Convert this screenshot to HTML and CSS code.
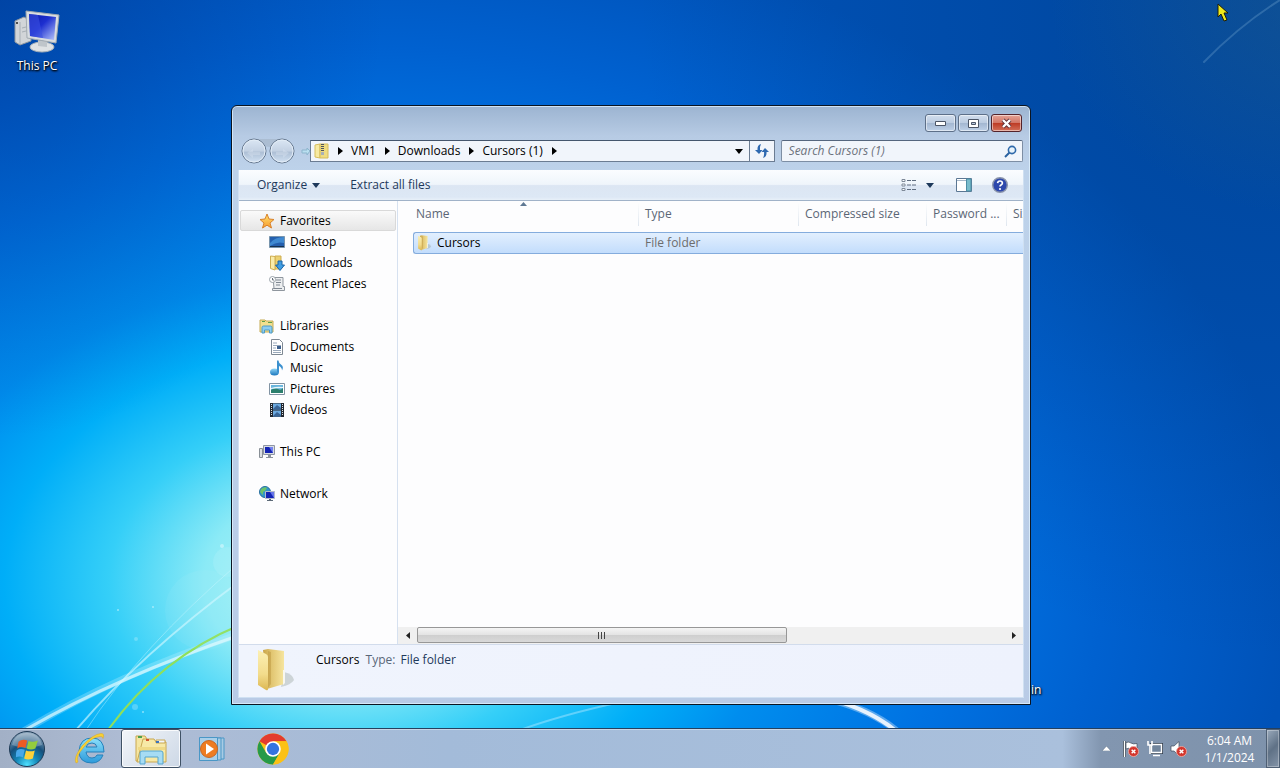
FILE: index.html
```html
<!DOCTYPE html>
<html lang="en">
<head>
  <meta charset="UTF-8">
  <title>Cursors (1)</title>
  <link rel="stylesheet" href="styles.css">
</head>
<body>

<!-- shared gradients and symbols -->
<svg class="defs" aria-hidden="true">
  <defs>
    <linearGradient id="gFolder" x1="0" y1="0" x2="0" y2="1">
      <stop offset="0" stop-color="#fcf0b4"/><stop offset=".6" stop-color="#f3dc8c"/><stop offset="1" stop-color="#dcb752"/>
    </linearGradient>
    <linearGradient id="gFolderBack" x1="0" y1="0" x2="1" y2="0">
      <stop offset="0" stop-color="#c9a448"/><stop offset=".35" stop-color="#dfc26c"/><stop offset="1" stop-color="#f6e59f"/>
    </linearGradient>
    <linearGradient id="gScreen" x1="0" y1="0" x2="1" y2="1">
      <stop offset="0" stop-color="#0a18a8"/><stop offset=".45" stop-color="#1d2fd0"/><stop offset="1" stop-color="#b9c8fb"/>
    </linearGradient>
    <linearGradient id="gBlue" x1="0" y1="0" x2="0" y2="1">
      <stop offset="0" stop-color="#8fd4f6"/><stop offset="1" stop-color="#1a76bd"/>
    </linearGradient>
    <linearGradient id="gStar" x1="0" y1="0" x2="0" y2="1">
      <stop offset="0" stop-color="#ffe36e"/><stop offset="1" stop-color="#f79a2e"/>
    </linearGradient>
    <radialGradient id="gOrb" cx=".5" cy=".95" r=".9">
      <stop offset="0" stop-color="#4fe0ff"/><stop offset=".35" stop-color="#1487b8"/><stop offset=".65" stop-color="#16507c"/><stop offset="1" stop-color="#8aa4bb"/>
    </radialGradient>
    <linearGradient id="gRound" x1="0" y1="0" x2="0" y2="1">
      <stop offset="0" stop-color="#dbe7f4"/><stop offset=".5" stop-color="#c3d1e3"/><stop offset=".55" stop-color="#adbfd5"/><stop offset="1" stop-color="#d3e3f4"/>
    </linearGradient>
    <linearGradient id="gIe" x1="0" y1="0" x2="0" y2="1">
      <stop offset="0" stop-color="#8be0fb"/><stop offset="1" stop-color="#2c9adb"/>
    </linearGradient>
  </defs>
  <symbol id="folder" viewBox="0 0 40 44">
    <path d="M27 24q9 2 10 8-3 5-13 7z" fill="#7f8a80" opacity=".3"/>
    <path d="M6 2l5-1 16 2v33l-17 5z" fill="url(#gFolderBack)"/>
    <path d="M11 3l3 1v32l-4 5z" fill="#b8923c" opacity=".45"/>
    <path d="M26 22h2v13l-2 2z" fill="#f8f7ef"/>
    <path d="M1 2l8 4q2 1 2 3v32q0 2-2 1l-8-5z" fill="url(#gFolder)"/>
  </symbol>
  <symbol id="library" viewBox="0 0 16 16">
    <path d="M1 2h5l1 1h7v11H1z" fill="#f2e08f" stroke="#c5ab55"/>
    <path d="M3 3.500h3M9 4.500h4" stroke="#5d9e4d"/>
    <path d="M3 15V9.500Q3 8 4.500 8h7Q13 8 13 9.500V15h-2.500v-3h-5v3z" fill="#8ccdf0" stroke="#4d9ac6"/>
  </symbol>
  <symbol id="right" viewBox="0 0 5 8"><path d="M0 0l5 4-5 4z" fill="#000"/></symbol>
  <symbol id="down" viewBox="0 0 8 5"><path d="M0 0h8L4 5z" fill="currentColor"/></symbol>
  <symbol id="cross" viewBox="0 0 12 12">
    <circle cx="6" cy="6" r="5.500" fill="#d3352c" stroke="#eaa39d"/>
    <path d="M4 4l4 4M8 4l-4 4" stroke="#fff" stroke-width="1.600"/>
  </symbol>
  <symbol id="flag" viewBox="0 0 40 40">
    <path d="M4 9q6-5 14-2l-3 12q-7-3-13 1z" fill="#ee5a24"/>
    <path d="M20 8q7 3 15-1l-4 13q-7 3-14 0z" fill="#93cc3d"/>
    <path d="M1 23q6-4 13-1l-3 12q-6-3-13 1z" fill="#47a8ea"/>
    <path d="M16 23q7 3 14 0l-3 13q-8 3-14 0z" fill="#fdd13a"/>
  </symbol>
</svg>

<main class="desktop">
  <svg class="beams" viewBox="0 0 1280 728" preserveAspectRatio="none" aria-hidden="true">
    <g fill="none" stroke-linecap="round">
      <path d="M22 732Q115 675 240 634" stroke="#bff3ff" stroke-width="7" opacity=".3"/>
      <path d="M25 730Q115 678 240 635" stroke="#e4fbff" stroke-width="3" opacity=".7"/>
      <path d="M76 730Q140 655 240 581" stroke="#cff7ff" stroke-width="2" opacity=".65"/>
      <path d="M86 730Q140 648 240 562" stroke="#cff7ff" opacity=".4"/>
      <path d="M108 730Q160 658 240 625" stroke="#8fe05a" stroke-width="2"/>
      <path d="M520 730Q570 712 640 698" stroke="#a8e6ff" stroke-width="2" opacity=".5"/>
      <path d="M820 697Q870 708 898 732" stroke="#fff" stroke-width="7" opacity=".35"/>
      <path d="M820 696Q868 708 896 731" stroke="#fff" stroke-width="4" opacity=".85"/>
      <path d="M1204 62Q1240 25 1280 0" stroke="#7fb0d8" stroke-width="2" opacity=".3"/>
    </g>
    <g fill="#dffaff" opacity=".55">
      <circle cx="222" cy="546" r="2"/><circle cx="118" cy="610" r="1"/><circle cx="153" cy="607" r="1"/>
      <circle cx="136" cy="639" r="2" opacity=".5"/><circle cx="135" cy="707" r="3" opacity=".5"/><circle cx="143" cy="712" r="1"/>
      <circle cx="228" cy="562" r="15" opacity=".25"/><circle cx="205" cy="610" r="40" opacity=".12"/>
    </g>
  </svg>

  <a class="shortcut this-pc" href="#">
    <svg width="48" height="48" viewBox="0 0 48 48" aria-hidden="true">
      <path d="M2 13l9-4 7 4v20l-11 4-5-3z" fill="#d2d5d8" stroke="#8f979e"/>
      <path d="M7 14v22M9 20l8-2M9 24l8-2" stroke="#a8afb5"/>
      <circle cx="4" cy="15" r="1" fill="#222"/>
      <ellipse cx="29" cy="39" rx="12" ry="5" fill="#dfe2e4" stroke="#aab2b8"/>
      <path d="M25 32l9 1v6l-9-1z" fill="#bfc5ca"/>
      <path d="M13 3l33 4-3 28-29-5z" fill="#d9dde0" stroke="#a2aab0"/>
      <path d="M16 6l27 3-2 23-24-4z" fill="url(#gScreen)"/>
      <path d="M16 6l9 1 5 23-13-2z" fill="#3b50e0" opacity=".6"/>
    </svg>
    <span>This PC</span>
  </a>
  <a class="shortcut recycle" href="#"><span>Recycle Bin</span></a>

  <section class="window" aria-label="Cursors (1)">
    <header class="titlebar">
      <button class="caption" aria-label="Minimize">
        <svg width="13" height="7" viewBox="0 0 13 7"><path d="M1.500 1.500h10v4h-10z" fill="#fff" stroke="#4b5566"/></svg>
      </button>
      <button class="caption" aria-label="Maximize">
        <svg width="11" height="9" viewBox="0 0 11 9"><path d="M.5.5h10v8H.5z" fill="#fff" stroke="#4b5566"/><path d="M3.500 3.500h4v2h-4z" fill="#b7c7dd" stroke="#4b5566"/></svg>
      </button>
      <button class="caption close" aria-label="Close">
        <svg width="13" height="11" viewBox="0 0 13 11"><path d="M3 2l7 7M10 2L3 9" stroke="#5e3037" stroke-width="4"/><path d="M3 2l7 7M10 2L3 9" stroke="#fff" stroke-width="2.400"/></svg>
      </button>
    </header>

    <div class="navbar">
      <div class="travel">
        <svg width="70" height="28" viewBox="0 0 70 28" aria-hidden="true">
          <path d="M15 2h28v5q-7 3-14 3t-14-3z" fill="#a5b6cb" opacity=".7"/>
          <path d="M61 13h5v-2l3 3-3 4v-2h-5z" fill="#b9dff0" stroke="#8db5cd"/>
        </svg>
        <button class="round back" aria-label="Back">
          <svg width="26" height="26" viewBox="0 0 26 26"><circle cx="13" cy="13" r="12" fill="url(#gRound)" stroke="#66788f"/><circle cx="13" cy="13" r="11" fill="none" stroke="#e3edf7"/><path d="M6 15l6-4v3h7v3h-7v3z" fill="#e0e9f3" opacity=".35"/></svg>
        </button>
        <button class="round forward" aria-label="Forward">
          <svg width="26" height="26" viewBox="0 0 26 26"><circle cx="13" cy="13" r="12" fill="url(#gRound)" stroke="#66788f"/><circle cx="13" cy="13" r="11" fill="none" stroke="#e3edf7"/><path d="M20 15l-6-4v3H7v3h7v3z" fill="#e0e9f3" opacity=".35"/></svg>
        </button>
      </div>
      <div class="address">
        <svg class="zip" width="16" height="16" viewBox="0 0 16 16" aria-hidden="true">
          <path d="M1 2l5-1v14l-5-1z" fill="#f7eaa2" stroke="#d6bd5c"/><path d="M6 1h8v14H6z" fill="#efdc80" stroke="#d6bd5c"/>
          <path d="M8.500 1v9" stroke="#4e5560" stroke-width="3" stroke-dasharray="1 1"/><path d="M7 9h3v3H7z" fill="#a8b0b8"/>
        </svg>
        <svg class="sep" width="5" height="8"><use href="#right"/></svg>
        <a href="#">VM1</a>
        <svg class="sep" width="5" height="8"><use href="#right"/></svg>
        <a href="#">Downloads</a>
        <svg class="sep" width="5" height="8"><use href="#right"/></svg>
        <a href="#">Cursors (1)</a>
        <svg class="sep" width="5" height="8"><use href="#right"/></svg>
        <button class="history" aria-label="Previous locations"><svg width="8" height="5"><use href="#down"/></svg></button>
        <button class="refresh" aria-label="Refresh">
          <svg width="16" height="16" viewBox="0 0 16 16"><path d="M7 1Q3 2 3.500 7H1l4 4 3.500-4H6Q5.500 4 7 1z" fill="#2e69b0"/><path d="M9 15q4-1 3.500-6H15l-4-4-3.500 4H10q.5 3-1 6z" fill="#2e69b0"/></svg>
        </button>
      </div>
      <div class="search">
        <input type="search" placeholder="Search Cursors (1)" aria-label="Search Cursors (1)">
        <svg width="13" height="13" viewBox="0 0 13 13" aria-hidden="true"><path d="M1 12l5-5" stroke="#2b62a0" stroke-width="2"/><circle cx="8" cy="5" r="3.600" fill="#e8f3fb" stroke="#2f69aa" stroke-width="1.600"/></svg>
      </div>
    </div>

    <div class="client">
      <div class="toolbar">
        <button>Organize <svg width="8" height="5"><use href="#down"/></svg></button>
        <button>Extract all files</button>
        <button class="views" aria-label="Change your view">
          <svg width="16" height="14" viewBox="0 0 16 14"><path d="M1 1.500h3v2H1zM1 6h3v2H1zM1 10.500h3v2H1z" fill="#fff" stroke="#7f8a99"/><path d="M6 2.500h4M11 2.500h4M6 7h4M11 7h4M6 11.500h4M11 11.500h4" stroke="#5f6d80"/></svg>
          <svg width="8" height="5"><use href="#down"/></svg>
        </button>
        <button class="preview" aria-label="Show the preview pane">
          <svg width="16" height="14" viewBox="0 0 16 14"><path d="M.5.5h15v13H.5z" fill="#fff" stroke="#5b7793"/><path d="M1 2.500h10" stroke="#a8b9ca"/><path d="M10.500 1h4.500v12h-4.500z" fill="#79bccb" stroke="#4d8ea5"/></svg>
        </button>
        <button aria-label="Get help">
          <svg width="16" height="16" viewBox="0 0 16 16"><circle cx="8" cy="8" r="7.300" fill="#2d48ac" stroke="#8a94ab" stroke-width="1.400"/><path d="M5.600 6.200Q5.800 4 8 4t2.400 2Q10.400 7.200 9 8q-1 .6-1 1.600" fill="none" stroke="#fff" stroke-width="1.700"/><circle cx="8" cy="12" r="1.100" fill="#fff"/></svg>
        </button>
      </div>

      <div class="panes">
        <nav class="sidebar">
          <ul>
            <li><a class="head selected" href="#">
              <svg width="16" height="16" viewBox="0 0 16 16"><path d="M8 1l2 5 5 .5-4 3.500 1.500 5L8 12.200 3.500 15 5 10 1 6.500 6 6z" fill="url(#gStar)" stroke="#d9822b"/></svg>
              Favorites</a></li>
            <li><a href="#">
              <svg width="16" height="16" viewBox="0 0 16 16"><path d="M.5 2.500h15v11H.5z" fill="#245fae" stroke="#7894ad"/><path d="M1 9Q6 3 15 3v6Q8 7 1 12z" fill="#4c9be0" opacity=".7"/><path d="M1 12h14v1H1z" fill="#17304e"/></svg>
              Desktop</a></li>
            <li><a href="#">
              <svg width="16" height="16" viewBox="0 0 16 16"><path d="M6 1h6v13H6z" fill="#ecd170" stroke="#cfae52"/><path d="M1.500 1l4.500.5V15l-4.500-1.500z" fill="#f9ecaa" stroke="#cfae52"/><path d="M9 6h4v4h2.500L11 15.500 6.500 10H9z" fill="#3f9de3" stroke="#1b64a6"/></svg>
              Downloads</a></li>
            <li><a href="#">
              <svg width="16" height="16" viewBox="0 0 16 16"><path d="M4 1.500h10v9h1.500v4H3.500v-2H5z" fill="#eceef0" stroke="#8f969e"/><path d="M7 4h5M7 6.500h5M7 9h4M5 12.500h8" stroke="#7e8792"/><circle cx="3.500" cy="3.500" r="3" fill="#fff" stroke="#9aa2aa"/><path d="M3.500 2v2H5" stroke="#68717c" fill="none"/></svg>
              Recent Places</a></li>
          </ul>
          <ul>
            <li><a class="head" href="#"><svg width="16" height="16"><use href="#library"/></svg> Libraries</a></li>
            <li><a href="#">
              <svg width="16" height="16" viewBox="0 0 16 16"><path d="M2.500.5h8l3 3v12h-11z" fill="#fff" stroke="#7e8893"/><path d="M4 4h4M4 6.500h8M4 9h3M4 11.500h8M4 13.500h8" stroke="#9aa9bb"/><path d="M8 7h4v3H8z" fill="#3c5f8d"/></svg>
              Documents</a></li>
            <li><a href="#">
              <svg width="16" height="16" viewBox="0 0 16 16"><ellipse cx="5.500" cy="12" rx="4.500" ry="3.500" fill="url(#gBlue)"/><path d="M8 12.500V.5h1.500q0 2.500 3 4.500 2.500 2 .5 5.500 0-3-3-4.500v6.500z" fill="#3b90cf"/></svg>
              Music</a></li>
            <li><a href="#">
              <svg width="16" height="16" viewBox="0 0 16 16"><path d="M.5 2.500h15v11H.5z" fill="#fff" stroke="#8193a3"/><path d="M2 4h12v8H2z" fill="#69b5dd"/><path d="M2 9q4-3 7-1t5-1v5H2z" fill="#2c7f6d"/><path d="M2 7q6-2 12-1v1Q8 7 2 8z" fill="#e8f6fa"/></svg>
              Pictures</a></li>
            <li><a href="#">
              <svg width="16" height="16" viewBox="0 0 16 16"><path d="M1 1h14v14H1z" fill="#23282f"/><path d="M4 1.500h8v6H4zM4 8.500h8v6H4z" fill="#6ca9df"/><path d="M4 7l4-4 4 3v1.500H4zM4 14l4-4 4 3v1.500H4z" fill="#3a6596"/><path d="M2.500 2v12M13.500 2v12" stroke="#dfe5ea" stroke-dasharray="1 1"/></svg>
              Videos</a></li>
          </ul>
          <ul>
            <li><a class="head" href="#">
              <svg width="16" height="16" viewBox="0 0 16 16"><path d="M.5 4.500h3v9h-3z" fill="#dcdfe2" stroke="#888f96"/><path d="M4.500 1.500h11v9h-11z" fill="#d9dde3" stroke="#8f96a5"/><path d="M6 3h8v6H6z" fill="#1424b4"/><path d="M10 3h4v6z" fill="#7382ef"/><path d="M9 11h3v2h2v1H7v-1h2z" fill="#8c939b"/></svg>
              This PC</a></li>
          </ul>
          <ul>
            <li><a class="head" href="#">
              <svg width="16" height="16" viewBox="0 0 16 16"><circle cx="6" cy="6" r="5.500" fill="#3196cb" stroke="#286f9e"/><path d="M2 3q4-3 6-1L6 5l-2 1v3L1 6z" fill="#6cc36a"/><path d="M6.500 5.500h9v7h-9z" fill="#1424b4" stroke="#b5bccb"/><path d="M11 6h4v6z" fill="#6675ea"/><path d="M10 13h2v1h2v1H8v-1h2z" fill="#5c6977"/></svg>
              Network</a></li>
          </ul>
        </nav>

        <div class="files">
          <div class="list">
            <table>
              <colgroup><col class="c-name"><col class="c-type"><col class="c-size"><col class="c-pass"><col></colgroup>
              <thead>
                <tr><th>Name<svg class="sort" width="7" height="4" viewBox="0 0 7 4" aria-hidden="true"><path d="M0 4l3.500-4L7 4z" fill="#5f7893"/></svg></th><th>Type</th><th>Compressed size</th><th>Password ...</th><th>Siz</th></tr>
              </thead>
              <tbody>
                <tr><td><svg width="16" height="16"><use href="#folder"/></svg>Cursors</td><td>File folder</td><td></td><td></td><td></td></tr>
              </tbody>
            </table>
          </div>
          <div class="scrollbar">
            <button aria-label="Scroll left"><svg width="4" height="7" viewBox="0 0 4 7"><path d="M4 0v7L0 3.500z" fill="#222"/></svg></button>
            <div class="track"><div class="thumb"><i></i><i></i><i></i></div></div>
            <button aria-label="Scroll right"><svg width="4" height="7" viewBox="0 0 4 7"><path d="M0 0v7l4-3.500z" fill="#222"/></svg></button>
          </div>
        </div>
      </div>

      <footer class="details">
        <svg width="40" height="44" aria-hidden="true"><use href="#folder"/></svg>
        <p><strong>Cursors</strong> <span>Type:</span> File folder</p>
      </footer>
    </div>
  </section>

  <svg class="pointer" width="12" height="20" viewBox="0 0 12 20" aria-hidden="true"><path d="M1 1v13l3-3 3 7 3-1-3-7h4z" fill="#f0ea1c" stroke="#1d1d08"/></svg>
</main>

<footer class="taskbar">
  <button class="start" aria-label="Start">
    <svg width="38" height="38" viewBox="0 0 38 38"><circle cx="19" cy="19" r="17.500" fill="url(#gOrb)" stroke="#1e3a55"/><path d="M4 15Q7 3 19 3t15 12q-15 6-30 0z" fill="#fff" opacity=".25"/><use href="#flag" x="8" y="6" width="25" height="25"/></svg>
  </button>
  <button class="task" aria-label="Internet Explorer">
    <svg width="34" height="34" viewBox="0 0 34 34"><path d="M31 20H13q1 6 6 6 4 0 5-3h6q-3 8-11 8Q6 31 6 19 7 6 19 6q12 0 12 14zM13 15h11q-1-4-5-4-5 0-6 4z" fill="url(#gIe)" stroke="#2581bb"/><path d="M3 31Q0 26 9 14 20 2 28 1.500q4 0 2 5 0-2.500-3-2Q19 5 11 15 2 25 5 30z" fill="#f9d132" stroke="#d9a521" stroke-width=".5"/></svg>
  </button>
  <button class="task active" aria-label="Windows Explorer">
    <svg width="34" height="32" viewBox="0 0 34 32"><path d="M2 3h9l2 3v22H2z" fill="#f5e6a1" stroke="#c9a750"/><path d="M9 6h11l2 3h10v20H3z" fill="#f7e9a6" stroke="#c9a750"/><path d="M4 3h4v2H4z" fill="#4fa04b"/><path d="M12 6h3v2h-3z" fill="#d3542e"/><path d="M22 7h9v3h-9z" fill="#f4f7fa" stroke="#c9a750"/><path d="M22 8h3v2h-3z" fill="#3c74bd"/><path d="M4 14h27v3H4z" fill="#efd985"/><path d="M6 31V20q0-2 2-2h19q2 0 2 2v11h-5v-7H11v7z" fill="#a6dcf4" stroke="#54a5cf"/></svg>
  </button>
  <button class="task" aria-label="Windows Media Player">
    <svg width="28" height="28" viewBox="0 0 28 28"><path d="M8 3h18v21H8z" fill="#a8cbe4" stroke="#4a97c6"/><path d="M5 3h18v22H5z" fill="#a8cbe4" stroke="#4a97c6"/><path d="M1.500 2.500h18v23h-18z" fill="#a9cfe9" stroke="#4a97c6"/><circle cx="11" cy="14" r="8.500" fill="#ee7c22" stroke="#c76826"/><path d="M8 8.500l8 5.500-8 5.500z" fill="#fff"/></svg>
  </button>
  <button class="task" aria-label="Google Chrome">
    <svg width="34" height="34" viewBox="0 0 48 48"><circle cx="24" cy="24" r="22" fill="#fbc116"/><path d="M24 24L4.950 13A22 22 0 0 1 43.050 13H24z" fill="#e33b2e"/><path d="M4.950 13L14.470 29.500 24 35 24 46A22 22 0 0 1 4.950 13z" fill="#269a49"/><path d="M24 46l9.530-16.500L24 24 14.470 29.500z" fill="#269a49"/><path d="M24 46A22 22 0 0 0 43.050 13H24l9.530 16.500z" fill="#fbc116"/><circle cx="24" cy="24" r="11" fill="#fff"/><circle cx="24" cy="24" r="8.700" fill="#3474e0"/></svg>
  </button>

  <div class="tray">
    <button aria-label="Show hidden icons"><svg width="9" height="5" viewBox="0 0 9 5"><path d="M0 5l4.500-5L9 5z" fill="#fff" stroke="#5b6c80" stroke-width=".5"/></svg></button>
    <button aria-label="Action Center">
      <svg width="18" height="18" viewBox="0 0 18 18"><path d="M2.500 1v16" stroke="#2f3b4a" stroke-width="3"/><path d="M2.500 1v16" stroke="#fff" stroke-width="1.500"/><path d="M4 2.500q3-1 5 .5t6 .5v6q-4 1-6-.5T4 9z" fill="#fff" stroke="#3f4c5c" stroke-width=".7"/><use href="#cross" x="6" y="6" width="11" height="11"/></svg>
    </button>
    <button aria-label="Network">
      <svg width="18" height="18" viewBox="0 0 18 18"><path d="M5.500 4.500h10v8h-10z" fill="#71859c" stroke="#2f3b4a" stroke-width="3"/><path d="M5.500 4.500h10v8h-10z" fill="#71859c" stroke="#fff" stroke-width="1.400"/><path d="M7 15.500h7M2 1v4h4V1M4 5v9" stroke="#fff" stroke-width="1.600" fill="none"/></svg>
    </button>
    <button aria-label="Volume">
      <svg width="18" height="18" viewBox="0 0 18 18"><path d="M1 6h3l5-4.500v14L4 11H1z" fill="#fff" stroke="#3f4c5c" stroke-width=".7"/><use href="#cross" x="6" y="6" width="11" height="11"/></svg>
    </button>
    <button class="clock"><time>6:04 AM</time><time>1/1/2024</time></button>
  </div>
  <button class="peek" aria-label="Show desktop"></button>
</footer>

</body>
</html>
```

FILE: styles.css
```css
* {
  box-sizing: border-box;
}

body {
  margin: 0;
  height: 100vh;
  display: flex;
  flex-direction: column;
  overflow: hidden;
  font: 12px/16px "Open Sans", "Noto Sans", sans-serif;
  color: #000;
}

button, input {
  font: inherit;
  color: inherit;
  margin: 0;
  padding: 0;
  border: none;
  background: none;
}

button {
  display: flex;
  align-items: center;
  justify-content: center;
}

a {
  color: inherit;
  text-decoration: none;
}

svg {
  flex: none;
  display: block;
}

.defs {
  position: absolute;
  width: 0;
  height: 0;
}

/* Desktop */
.desktop {
  flex: 1;
  position: relative;
  overflow: hidden;
  background:
    radial-gradient(ellipse 22% 30% at 104% 0%, rgba(40, 100, 140, 0.4), transparent),
    radial-gradient(ellipse 50% 90% at 100% 0%, rgba(0, 50, 110, 0.4), transparent),
    radial-gradient(ellipse 30% 60% at 0% 0%, rgba(0, 50, 140, 0.5), transparent),
    radial-gradient(ellipse 74% 92% at 27% 80%, #c4fbf5 0%, #8beaf6 15%, #35cff8 25%, #00aef8 36%, #008dee 46%, #0072e2 64%, #0061d0 80%, #0052b8 100%);
}

.beams {
  width: 100%;
  height: 100%;
}

.shortcut {
  position: absolute;
  display: flex;
  flex-direction: column;
  align-items: center;
  width: 74px;
  color: #fff;
  text-shadow: 0 1px 2px #000, 1px 1px 2px #000;
}

.this-pc {
  left: 0;
  top: 8px;
  gap: 2px;
}

.recycle {
  right: 233px;
  bottom: 30px;
  white-space: nowrap;
}

.pointer {
  position: absolute;
  right: 51px;
  top: 3px;
}

/* Explorer window */
.window {
  position: absolute;
  left: 231px;
  right: 249px;
  top: 105px;
  bottom: 23px;
  display: flex;
  flex-direction: column;
  padding: 0 6px 6px;
  border: 1px solid #0b1522;
  border-radius: 6px 6px 0 0;
  background: linear-gradient(#9cb4d1, #b7cbe4 30px, #bdd2ea 64px, #b9cbe6);
  box-shadow: inset 0 0 0 1px rgba(225, 243, 255, 0.75);
}

.titlebar {
  display: flex;
  justify-content: flex-end;
  gap: 2px;
  height: 31px;
  padding: 8px 2px 0 0;
}

.caption {
  width: 31px;
  height: 18px;
  border: 1px solid #5d6f88;
  border-radius: 3px;
  background: linear-gradient(#d2deed, #bccce1 48%, #a3b7d1 52%, #bed1e8);
  box-shadow: inset 0 0 0 1px rgba(255, 255, 255, 0.5);
}

.close {
  border-color: #53232b;
  background: linear-gradient(#e5a396, #d27666 48%, #bd3b25 52%, #d3705a);
}

.navbar {
  display: flex;
  align-items: center;
  height: 28px;
  margin-bottom: 5px;
  padding: 0 1px 0 3px;
}

.travel {
  position: relative;
  width: 69px;
}

.round {
  position: absolute;
  top: 1px;
  border-radius: 50%;
}

.back {
  left: 0;
}

.forward {
  left: 28px;
}

.address {
  flex: 1;
  display: flex;
  align-items: center;
  gap: 8px;
  height: 22px;
  padding-left: 3px;
  border: 1px solid #6b7c92;
  border-top-color: #45566d;
  background: #f1f5fb;
}

.sep {
  margin-left: 1px;
}

.zip {
  margin-right: -1px;
}

.history {
  margin-left: auto;
}

.refresh {
  width: 25px;
  height: 20px;
  margin-left: -2px;
  border-left: 1px solid #6b7c92;
}

.search {
  display: flex;
  align-items: center;
  width: 31%;
  height: 22px;
  margin-left: 6px;
  padding: 0 5px 0 7px;
  border: 1px solid #7d8ea4;
  border-top-color: #55667e;
  border-radius: 2px;
  background: #f1f5fb;
}

.search input {
  flex: 1;
  min-width: 0;
  outline: none;
  font-style: italic;
}

.search input::placeholder {
  color: #6c727b;
}

.client {
  flex: 1;
  min-height: 0;
  display: flex;
  flex-direction: column;
  border: 1px solid #cfe0f2;
  border-top: none;
  background: #fdfdfe;
}

/* Command bar */
.toolbar {
  display: flex;
  align-items: center;
  height: 31px;
  padding: 0 15px 0 18px;
  border-bottom: 1px solid #a0b2c8;
  background: linear-gradient(#fbfdff, #eff5fb 48%, #dce6f3 52%, #dde8f5 90%, #e8f0f9);
  color: #1e395b;
}

.toolbar button {
  gap: 5px;
  margin-right: 30px;
}

.toolbar .views {
  gap: 9px;
  margin-left: auto;
  margin-right: 22px;
}

.toolbar .preview {
  margin-right: 20px;
}

.toolbar button:last-child {
  margin-right: 0;
}

.panes {
  flex: 1;
  min-height: 0;
  display: flex;
}

.sidebar {
  width: 159px;
  padding: 9px 1px;
  border-right: 1px solid #d6e1f0;
}

.sidebar ul {
  list-style: none;
  margin: 0 0 21px;
  padding: 0;
}

.sidebar a {
  display: flex;
  align-items: center;
  gap: 5px;
  height: 21px;
  padding-left: 29px;
}

.sidebar .head {
  padding-left: 19px;
}

.sidebar .selected {
  padding-left: 18px;
  border: 1px solid #d9d9d9;
  border-radius: 2px;
  background: linear-gradient(#fafafa, #e6e6e6);
}

/* File list */
.files {
  flex: 1;
  min-width: 0;
  display: flex;
  flex-direction: column;
}

.list {
  flex: 1;
  min-height: 0;
  overflow: hidden;
  padding-left: 15px;
}

table {
  width: 100%;
  table-layout: fixed;
  border-spacing: 0;
}

.c-name {
  width: 226px;
}

.c-type {
  width: 160px;
}

.c-size {
  width: 128px;
}

.c-pass {
  width: 80px;
}

th {
  position: relative;
  height: 31px;
  padding: 5px 0 0 6px;
  vertical-align: top;
  text-align: left;
  font-weight: normal;
  white-space: nowrap;
  color: #5b6675;
  background: linear-gradient(#fff, #dfe6ef) right top / 1px 25px no-repeat;
}

th:first-child {
  padding-left: 3px;
}

th:last-child {
  overflow: hidden;
  background: none;
}

.sort {
  position: absolute;
  left: 107px;
  top: 1px;
}

td {
  height: 22px;
  padding: 0 0 0 6px;
  border: solid #84acdd;
  border-width: 1px 0;
  background: linear-gradient(#e2effe, #c3ddfc);
  color: #6d6d6d;
}

td:first-child {
  padding-left: 3px;
  border-left-width: 1px;
  border-radius: 3px 0 0 3px;
  color: #000;
}

td svg {
  float: left;
  margin-right: 4px;
}

.scrollbar {
  display: flex;
  height: 17px;
  background: #f0f0f0;
}

.scrollbar button {
  width: 19px;
}

.track {
  flex: 1;
}

.thumb {
  display: flex;
  align-items: center;
  justify-content: center;
  gap: 2px;
  width: 63%;
  height: 16px;
  border: 1px solid #979797;
  border-radius: 2px;
  background: linear-gradient(#f5f5f5, #e4e4e4 48%, #cfcfcf 52%, #d9d9d9);
}

.thumb i {
  width: 1px;
  height: 7px;
  background: #444;
}

/* Details pane */
.details {
  display: flex;
  height: 53px;
  padding: 3px 18px;
  border-top: 1px solid #d2dcec;
  background: linear-gradient(90deg, #f0f4fd, #eef2fd);
}

.details p {
  margin: 4px 0 0 19px;
  color: #1e395b;
}

.details strong {
  margin-right: 3px;
  font-weight: normal;
  color: #000;
}

.details span {
  margin-right: 2px;
  color: #5a6779;
}

/* Taskbar */
.taskbar {
  display: flex;
  gap: 1px;
  height: 40px;
  border-top: 1px solid #25405f;
  background: linear-gradient(90deg, #a2b0c6, #aebcd4 10%, #a3bbd9 35%, #aac0dc 83%, #8296b0 86%, #7e92ab);
  box-shadow: inset 0 1px 0 rgba(255, 255, 255, 0.4);
}

.start {
  width: 59px;
  padding-right: 6px;
}

.task {
  width: 60px;
}

.active {
  border: 1px solid #3f5165;
  border-radius: 3px;
  background: linear-gradient(135deg, #f2f5f9, #cdd8e6);
  box-shadow: inset 0 0 0 1px rgba(255, 255, 255, 0.8);
}

.tray {
  display: flex;
  align-items: center;
  gap: 6px;
  margin-left: auto;
  color: #fff;
}

.tray button:first-child {
  margin-right: 5px;
}

.clock {
  flex-direction: column;
  width: 71px;
  line-height: 17px;
}

.peek {
  width: 14px;
  border: 1px solid #4e5f74;
  background: linear-gradient(135deg, #99a9bb, #5f7186 50%, #8494a8);
  box-shadow: inset 0 0 0 1px rgba(255, 255, 255, 0.3);
}
```
